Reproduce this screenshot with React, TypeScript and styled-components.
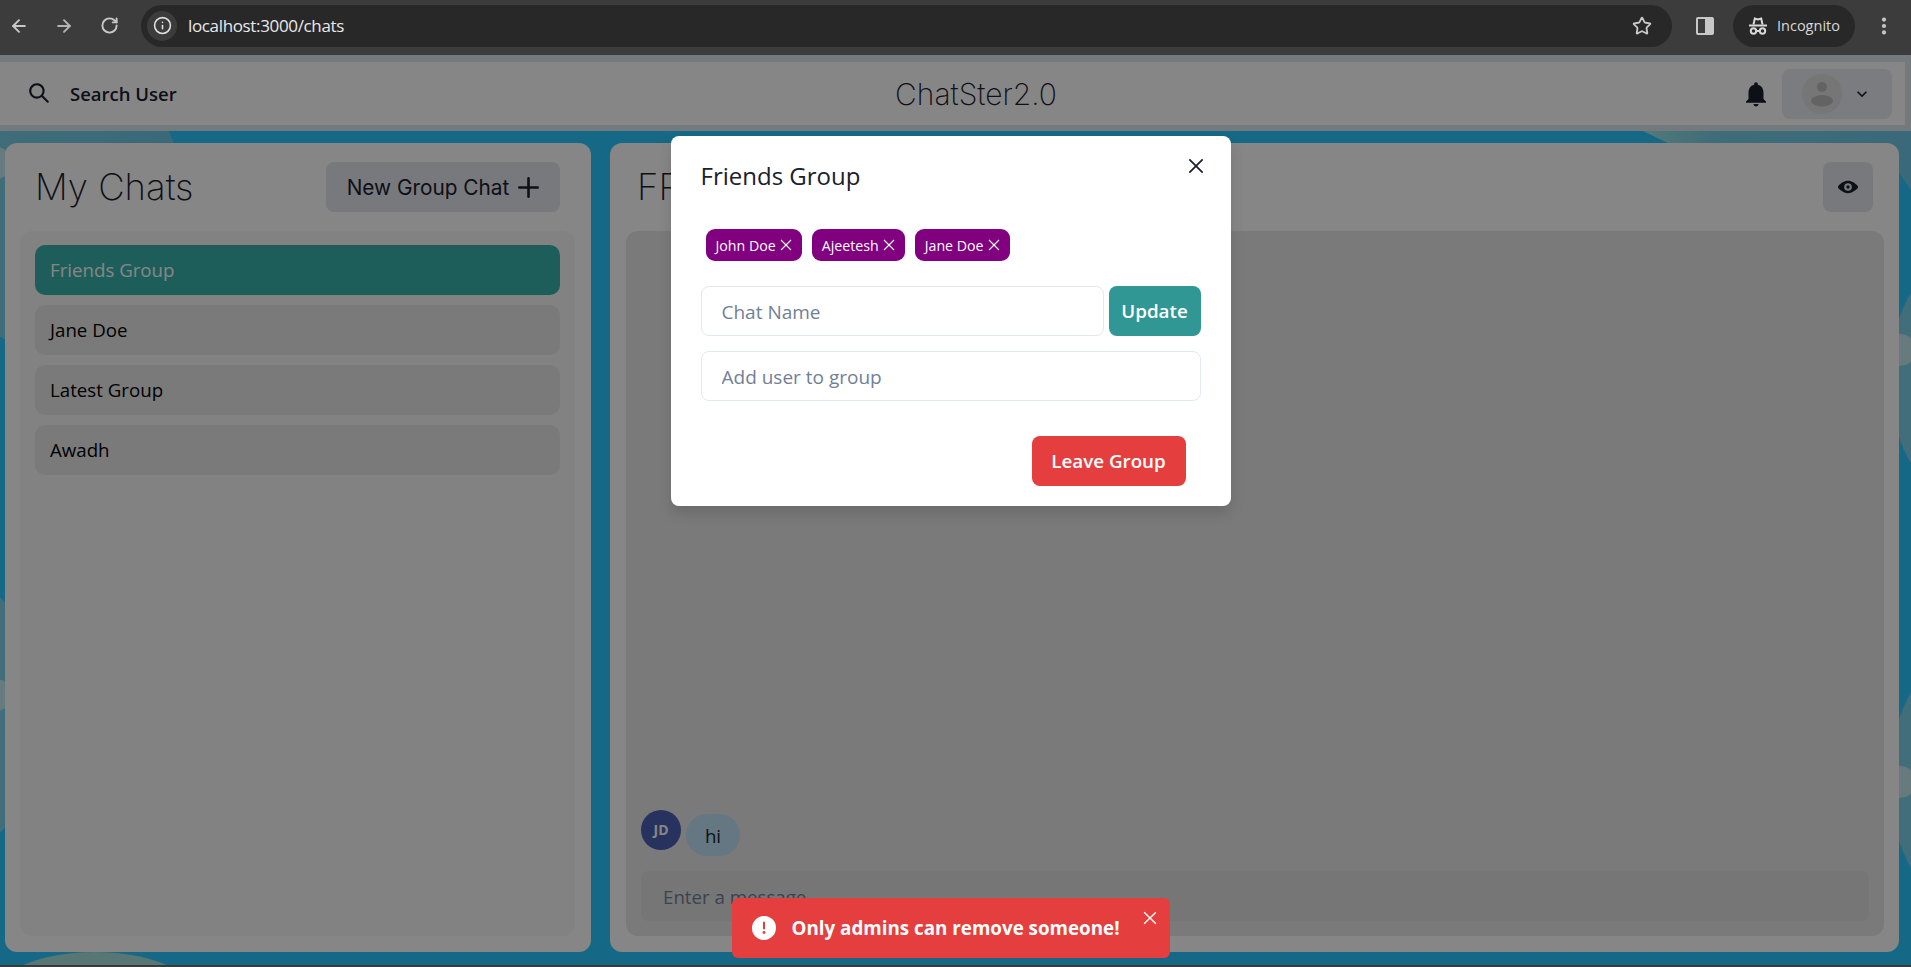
import React from 'react'
import styled, { createGlobalStyle } from 'styled-components'
import { ArrowLeft, ArrowRight, RotateCw, Info, Star, EllipsisVertical } from 'lucide-react'

const BODY_FONT = '"Open Sans", "Noto Sans", sans-serif'
const TITLE_FONT = 'Inter, "Open Sans", sans-serif'

const GlobalStyle = createGlobalStyle`
  html, body {
    margin: 0;
    height: 100%;
    overflow: hidden;
    background: #3a3a3a;
    font-family: ${BODY_FONT};
  }
  * {
    box-sizing: border-box;
  }
`

const Root = styled.div`
  width: 1911px;
  height: 967px;
  display: flex;
  flex-direction: column;
`

/* browser chrome */
const Chrome = styled.div`
  height: 55px;
  flex: none;
  background: #3c3c3c;
  display: flex;
  align-items: center;
  padding: 0 0 4px 9px;
  color: #c8c8c8;
`

const NavButton = styled.div<{ $dim?: boolean }>`
  width: 20px;
  height: 20px;
  margin-right: 25px;
  display: flex;
  align-items: center;
  justify-content: center;
  color: ${props => (props.$dim ? '#b4b4b4' : '#c8c8c8')};
`

const UrlPill = styled.div`
  width: 1531px;
  height: 42px;
  margin-left: -3px;
  margin-right: 23px;
  border-radius: 21px;
  background: #282828;
  display: flex;
  align-items: center;
  padding: 0 20px 0 6px;
`

const InfoBadge = styled.div`
  width: 30px;
  height: 30px;
  border-radius: 50%;
  background: #3c3c3c;
  color: #e0e0e0;
  display: flex;
  align-items: center;
  justify-content: center;
`

const UrlText = styled.span`
  margin-left: 11px;
  flex: 1;
  color: #e8e8e8;
  font-size: 17px;
  font-family: "Open Sans", sans-serif;
  letter-spacing: -0.35px;
`

const SideIcon = styled.svg`
  margin-right: 18px;
`

const IncognitoPill = styled.div`
  width: 122px;
  height: 42px;
  border-radius: 21px;
  background: #282828;
  display: flex;
  align-items: center;
  gap: 9px;
  padding-left: 15px;
  color: #d8d8d8;
  font-size: 14.5px;
  margin-right: 18px;
`

/* page */
const Page = styled.div`
  position: relative;
  height: 910px;
  flex: none;
  background: #2ac8ff;
  display: flex;
  flex-direction: column;
  overflow: hidden;
`

const Waves = styled.svg`
  position: absolute;
  inset: 0;
`

const Header = styled.header`
  position: relative;
  height: 76px;
  flex: none;
  background: #fff;
  border: solid #dde6f0;
  border-width: 7px 6px 6px 0;
  display: flex;
  align-items: center;
  justify-content: space-between;
  padding: 0 13px 0 29px;
`

const SearchButton = styled.div`
  width: 182px;
  display: flex;
  align-items: center;
  gap: 21px;
  font-size: 18.5px;
  font-weight: 600;
  color: #1a202c;
  svg {
    margin-top: -2px;
  }
`

const Brand = styled.div`
  font-family: ${TITLE_FONT};
  font-size: 30px;
  font-weight: 200;
  color: #1a202c;
`

const HeaderRight = styled.div`
  width: 151px;
  display: flex;
  align-items: center;
  justify-content: space-between;
`

const UserMenu = styled.div`
  width: 110px;
  height: 50px;
  border-radius: 8px;
  background: #e8ecf2;
  display: flex;
  align-items: center;
  padding-left: 20px;
  gap: 10px;
`

const Content = styled.main`
  position: relative;
  flex: 1;
  min-height: 0;
  display: flex;
  gap: 19px;
  padding: 12px 12px 13px 5px;
`

const Panel = styled.section<{ $width?: number }>`
  background: #fff;
  border-radius: 12px;
  display: flex;
  flex-direction: column;
  padding-top: 19px;
  padding-bottom: 16px;
  ${props => (props.$width ? `width: ${props.$width}px; flex: none;` : 'flex: 1; min-width: 0;')}
`

const PanelHead = styled.div`
  height: 50px;
  flex: none;
  margin-bottom: 19px;
  display: flex;
  align-items: center;
  justify-content: space-between;
`

const LeftHead = styled(PanelHead)`
  padding: 0 31px 0 30px;
`

const RightHead = styled(PanelHead)`
  padding: 0 26px 0 27px;
`

const Title = styled.h2`
  margin: 0;
  font-family: ${TITLE_FONT};
  font-size: 36.5px;
  font-weight: 200;
  color: #1a202c;
  white-space: nowrap;
`

const GrayButton = styled.div<{ $square?: boolean }>`
  height: 50px;
  width: ${props => (props.$square ? '50px' : '234px')};
  background: #e4e7ee;
  border-radius: 8px;
  display: flex;
  align-items: center;
  justify-content: center;
  gap: 9px;
  font-family: ${TITLE_FONT};
  font-size: 20.8px;
  color: #1a202c;
`

const ChatList = styled.div`
  flex: 1;
  margin: 0 16px 0 15px;
  background: #f8f8f8;
  border-radius: 12px;
  padding: 14px 15px;
  display: flex;
  flex-direction: column;
  gap: 10px;
`

const ChatRow = styled.div<{ $active?: boolean }>`
  height: 50px;
  border-radius: 10px;
  padding: 0 15px 2px;
  display: flex;
  align-items: center;
  font-size: 18.7px;
  background: ${props => (props.$active ? '#38b2ac' : '#e8e8e8')};
  color: ${props => (props.$active ? '#fff' : '#000')};
`

const ChatBox = styled.div`
  flex: 1;
  margin: 0 15px 0 16px;
  background: #e8e8e8;
  border-radius: 12px;
  padding: 15px;
  display: flex;
  flex-direction: column;
  justify-content: flex-end;
`

const MessageRow = styled.div`
  display: flex;
  align-items: flex-start;
  gap: 5px;
  margin-bottom: 15px;
`

const Initials = styled.div`
  width: 40px;
  height: 40px;
  border-radius: 50%;
  background: #4a5fb4;
  color: #fff;
  font-size: 14px;
  font-weight: 700;
  padding-bottom: 2px;
  display: flex;
  align-items: center;
  justify-content: center;
`

const Bubble = styled.div`
  width: 54px;
  height: 42px;
  margin-top: 4px;
  border-radius: 24px;
  background: #bee3f8;
  color: #1a202c;
  font-size: 18.7px;
  display: flex;
  align-items: center;
  justify-content: center;
`

const MessageInput = styled.input`
  height: 50px;
  width: 100%;
  border: 0;
  outline: 0;
  border-radius: 8px;
  background: #e0e0e0;
  padding: 0 22px;
  font-family: ${BODY_FONT};
  font-size: 18.7px;
  &::placeholder {
    color: #718096;
    opacity: 1;
  }
`

/* modal layer */
const Overlay = styled.div`
  position: absolute;
  inset: 0;
  background: rgba(0, 0, 0, 0.475);
  display: flex;
  flex-direction: column;
  align-items: center;
  padding: 81px 10px 7px 0;
`

const Modal = styled.div`
  position: relative;
  width: 560px;
  height: 370px;
  flex: none;
  background: #fff;
  border-radius: 8px;
  box-shadow: 0 8px 14px rgba(0, 0, 0, 0.12);
  padding: 20px 30px 0 30px;
  color: #1a202c;
`

const ModalTitle = styled.h3`
  margin: 0;
  height: 40px;
  line-height: 40px;
  font-size: 24px;
  font-weight: 500;
`

const CloseButton = styled.div`
  position: absolute;
  top: 22px;
  right: 27px;
  width: 16px;
  height: 16px;
  display: flex;
`

const Chips = styled.div`
  display: flex;
  gap: 10px;
  margin: 33px 0 25px 5px;
`

const Chip = styled.div`
  height: 32px;
  padding: 0 10px;
  border-radius: 9px;
  background: #800080;
  color: #fff;
  font-size: 14.2px;
  display: flex;
  align-items: center;
  gap: 4px;
`

const NameRow = styled.div`
  display: flex;
  gap: 5px;
  margin-bottom: 15px;
`

const Field = styled.input`
  flex: 1;
  min-width: 0;
  height: 50px;
  border: 1px solid #e2e8f0;
  border-radius: 8px;
  outline: 0;
  padding: 2px 20px 0;
  background: #fff;
  font-family: ${BODY_FONT};
  font-size: 19px;
  &::placeholder {
    color: #718096;
    opacity: 1;
  }
`

const WideField = styled(Field)`
  display: block;
  width: 100%;
  flex: none;
`

const SolidButton = styled.div<{ $color: string; $width: number }>`
  width: ${props => props.$width}px;
  height: 50px;
  flex: none;
  border-radius: 8px;
  background: ${props => props.$color};
  color: #fff;
  font-size: 18.8px;
  font-weight: 600;
  display: flex;
  align-items: center;
  justify-content: center;
`

const ModalFooter = styled.div`
  display: flex;
  justify-content: flex-end;
  margin-top: 35px;
  padding-right: 15px;
`

const Toast = styled.div`
  position: relative;
  margin-top: auto;
  width: 438px;
  height: 60px;
  flex: none;
  border-radius: 6px;
  background: #e53e3e;
  color: #fff;
  display: flex;
  align-items: center;
  gap: 16px;
  padding-left: 20px;
  font-size: 18.8px;
  font-weight: 700;
`

const ToastClose = styled.div`
  position: absolute;
  top: 13px;
  right: 13px;
  width: 14px;
  height: 14px;
  display: flex;
`

const Cross = ({ size = 12, width = 1.5 }: { size?: number; width?: number }) => (
  <svg width={size} height={size} viewBox="0 0 12 12" fill="none" stroke="currentColor" strokeWidth={width}>
    <path d="M1 1l10 10M11 1L1 11" />
  </svg>
)

const IncognitoIcon = () => (
  <svg width="20" height="20" viewBox="0 0 20 20" fill="none" stroke="currentColor" strokeWidth="2">
    <path d="M5.5 8.5l1.3-6 3.2 1 3.2-1 1.3 6" />
    <path d="M1 9.5h18" />
    <circle cx="5.5" cy="15" r="2.7" />
    <circle cx="14.5" cy="15" r="2.7" />
    <path d="M8.2 15h3.6" />
  </svg>
)

const chats = ['Friends Group', 'Jane Doe', 'Latest Group', 'Awadh']
const members = ['John Doe', 'Ajeetesh', 'Jane Doe']

const App: React.FC = () => (
  <Root>
    <GlobalStyle />
    <Chrome>
      <NavButton><ArrowLeft size={22} strokeWidth={2.3} /></NavButton>
      <NavButton $dim><ArrowRight size={22} strokeWidth={2.3} /></NavButton>
      <NavButton><RotateCw size={19} strokeWidth={2.4} /></NavButton>
      <UrlPill>
        <InfoBadge><Info size={19} strokeWidth={2} /></InfoBadge>
        <UrlText>localhost:3000/chats</UrlText>
        <Star size={20} strokeWidth={2.2} />
      </UrlPill>
      <SideIcon width="20" height="20" viewBox="0 0 20 20">
        <path fill="#c8c8c8" fillRule="evenodd" d="M3 1h14a2 2 0 0 1 2 2v14a2 2 0 0 1-2 2H3a2 2 0 0 1-2-2V3a2 2 0 0 1 2-2zm0 2v14h7V3z" />
      </SideIcon>
      <IncognitoPill><IncognitoIcon />Incognito</IncognitoPill>
      <EllipsisVertical size={22} strokeWidth={2.6} />
    </Chrome>
    <Page>
      <Waves width="1911" height="910" viewBox="0 0 1911 910">
        <defs>
          <linearGradient id="wave" x1="0" y1="0" x2="1" y2="0">
            <stop offset="0" stopColor="#9fe8e8" />
            <stop offset="0.25" stopColor="#78cfe6" />
            <stop offset="1" stopColor="#6dc8e8" />
          </linearGradient>
        </defs>
        <ellipse cx="60" cy="150" rx="125" ry="150" fill="url(#wave)" />
        <ellipse cx="-30" cy="660" rx="70" ry="130" fill="#7fd0e8" />
        <circle cx="-4" cy="108" r="16" fill="#c4e8f0" />
        <circle cx="-4" cy="640" r="16" fill="#c4e8f0" />
        <ellipse cx="95" cy="935" rx="95" ry="38" fill="#a6e0dc" />
        <path d="M1643 76L1672 90H1880L1911 135V70H1643z" fill="url(#wave)" />
        <ellipse cx="1950" cy="323" rx="60" ry="112" fill="#7fd0e8" />
        <ellipse cx="1950" cy="725" rx="60" ry="115" fill="#7fd0e8" />
        <circle cx="1900" cy="295" r="16" fill="#c4e8f0" />
        <circle cx="1900" cy="727" r="16" fill="#c4e8f0" />
      </Waves>
      <Header>
        <SearchButton>
          <svg width="20" height="20" viewBox="0 0 24 24" fill="currentColor">
            <path d="M23.384,21.619,16.855,15.09a9.284,9.284,0,1,0-1.768,1.768l6.529,6.529a1.266,1.266,0,0,0,1.768,0A1.251,1.251,0,0,0,23.384,21.619ZM2.75,9.5a6.75,6.75,0,1,1,6.75,6.75A6.758,6.758,0,0,1,2.75,9.5Z" />
          </svg>
          Search User
        </SearchButton>
        <Brand>ChatSter2.0</Brand>
        <HeaderRight>
          <svg width="30" height="30" viewBox="0 0 24 24" fill="#1a202c">
            <path d="M12 22c1.1 0 2-.9 2-2h-4c0 1.1.9 2 2 2zm6-6v-5c0-3.07-1.64-5.64-4.5-6.32V4c0-.83-.67-1.5-1.5-1.5s-1.5.67-1.5 1.5v.68C7.63 5.36 6 7.92 6 11v5l-2 2v1h16v-1l-2-2z" />
          </svg>
          <UserMenu>
            <svg width="40" height="40" viewBox="0 0 40 40">
              <circle cx="20" cy="20" r="20" fill="#e0e0e0" />
              <circle cx="20" cy="13" r="5" fill="#bcbcbc" />
              <ellipse cx="20" cy="26.7" rx="11" ry="5.7" fill="#bcbcbc" />
            </svg>
            <svg width="20" height="20" viewBox="0 0 24 24" fill="#1a202c">
              <path d="M16.59 8.59L12 13.17 7.41 8.59 6 10l6 6 6-6z" />
            </svg>
          </UserMenu>
        </HeaderRight>
      </Header>
      <Content>
        <Panel $width={586}>
          <LeftHead>
            <Title>My Chats</Title>
            <GrayButton>
              New Group Chat
              <svg width="21" height="21" viewBox="0 0 24 24" fill="currentColor">
                <path d="M0,12a1.5,1.5,0,0,0,1.5,1.5h8.75a.25.25,0,0,1,.25.25V22.5a1.5,1.5,0,0,0,3,0V13.75a.25.25,0,0,1,.25-.25H22.5a1.5,1.5,0,0,0,0-3H13.75a.25.25,0,0,1-.25-.25V1.5a1.5,1.5,0,0,0-3,0v8.75a.25.25,0,0,1-.25.25H1.5A1.5,1.5,0,0,0,0,12Z" />
              </svg>
            </GrayButton>
          </LeftHead>
          <ChatList>
            {chats.map((chat, index) => (
              <ChatRow key={chat} $active={index === 0}>{chat}</ChatRow>
            ))}
          </ChatList>
        </Panel>
        <Panel>
          <RightHead>
            <Title>FRIENDS GROUP</Title>
            <GrayButton $square>
              <svg width="20" height="20" viewBox="0 0 24 24" fill="currentColor">
                <path d="M23.432,10.524C20.787,7.614,16.4,4.538,12,4.6,7.6,4.537,3.213,7.615.568,10.524a2.211,2.211,0,0,0,0,2.948C3.182,16.351,7.507,19.4,11.839,19.4h.308c4.347,0,8.671-3.049,11.288-5.929A2.21,2.21,0,0,0,23.432,10.524ZM7.4,12A4.6,4.6,0,1,1,12,16.6,4.6,4.6,0,0,1,7.4,12Z" />
                <circle cx="12" cy="12" r="2" />
              </svg>
            </GrayButton>
          </RightHead>
          <ChatBox>
            <MessageRow>
              <Initials>JD</Initials>
              <Bubble>hi</Bubble>
            </MessageRow>
            <MessageInput placeholder="Enter a message.." readOnly />
          </ChatBox>
        </Panel>
      </Content>
      <Overlay>
        <Modal>
          <ModalTitle>Friends Group</ModalTitle>
          <CloseButton><Cross size={16} width={1.3} /></CloseButton>
          <Chips>
            {members.map(member => (
              <Chip key={member}>{member}<Cross size={12} width={1.1} /></Chip>
            ))}
          </Chips>
          <NameRow>
            <Field placeholder="Chat Name" readOnly />
            <SolidButton $color="#319795" $width={92}>Update</SolidButton>
          </NameRow>
          <WideField placeholder="Add user to group" readOnly />
          <ModalFooter>
            <SolidButton $color="#e53e3e" $width={154}>Leave Group</SolidButton>
          </ModalFooter>
        </Modal>
        <Toast>
          <svg width="24" height="24" viewBox="0 0 24 24" fill="currentColor">
            <path d="M11.983,0a12.206,12.206,0,0,0-8.51,3.653A11.8,11.8,0,0,0,0,12.207,11.779,11.779,0,0,0,11.8,24h.214A12.111,12.111,0,0,0,24,11.791h0A11.766,11.766,0,0,0,11.983,0ZM10.5,16.542a1.476,1.476,0,0,1,1.449-1.53h.027a1.527,1.527,0,0,1,1.523,1.47,1.475,1.475,0,0,1-1.449,1.53h-.027A1.529,1.529,0,0,1,10.5,16.542ZM11,12.5v-6a1,1,0,0,1,2,0v6a1,1,0,1,1-2,0Z" />
          </svg>
          Only admins can remove someone!
          <ToastClose><Cross size={14} width={1.2} /></ToastClose>
        </Toast>
      </Overlay>
    </Page>
  </Root>
)

export default App
